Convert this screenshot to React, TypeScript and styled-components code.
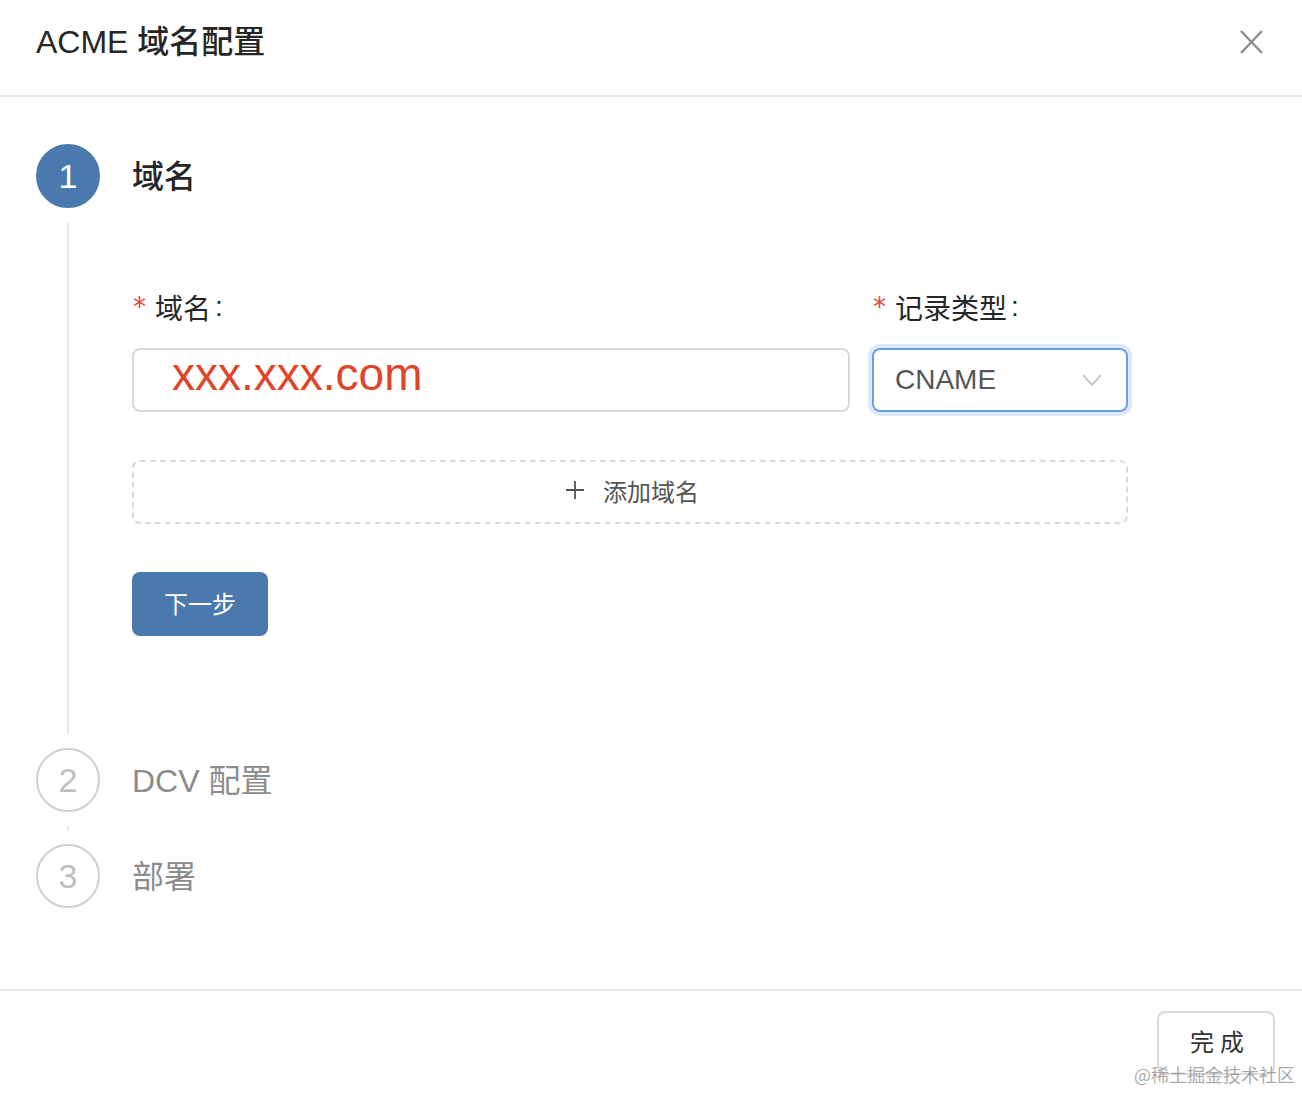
import styled, { createGlobalStyle } from "styled-components";

const FONT = `"Liberation Sans", "Noto Sans CJK SC", sans-serif`;
const BLUE = "#4a7aad";

const GlobalStyle = createGlobalStyle`
  body {
    margin: 0;
    background: #ffffff;
    font-family: ${FONT};
  }
`;

const Modal = styled.div`
  width: 1302px;
  height: 1094px;
  background: #fff;
  display: flex;
  flex-direction: column;
  position: relative;
  overflow: hidden;
`;

const Header = styled.div`
  height: 95px;
  padding: 0 36px;
  display: flex;
  align-items: center;
  justify-content: space-between;
  border-bottom: 2px solid #e8e8e8;
`;

const Title = styled.h1`
  margin: 0;
  font-size: 32px;
  font-weight: 500;
  color: #262626;
  padding-bottom: 18px;
`;

const CloseBtn = styled.button`
  border: 0;
  background: none;
  padding: 0;
  margin-right: 1px;
  margin-bottom: 12px;
  width: 28px;
  height: 28px;
  display: flex;
  align-items: center;
  justify-content: center;
`;

const Body = styled.div`
  padding: 47px 36px 49px;
  display: flex;
  flex-direction: column;
`;

const StepItem = styled.div`
  display: flex;
  gap: 32px;
`;

const StepRail = styled.div`
  width: 64px;
  display: flex;
  flex-direction: column;
  align-items: center;
`;

const Circle = styled.div<{ $active?: boolean }>`
  width: 64px;
  height: 64px;
  box-sizing: border-box;
  border-radius: 50%;
  display: flex;
  align-items: center;
  justify-content: center;
  font-size: 34px;
  background: ${(p) => (p.$active ? BLUE : "#fff")};
  border: 2px solid ${(p) => (p.$active ? BLUE : "#cfcfcf")};
  color: ${(p) => (p.$active ? "#fff" : "#bfbfbf")};
`;

const Tail = styled.div<{ $hidden?: boolean }>`
  flex: 1;
  width: 2px;
  margin: 14px 0 13px;
  background: ${(p) => (p.$hidden ? "transparent" : "#e8e8e8")};
`;

const StepContent = styled.div<{ $pad: number }>`
  flex: 1;
  padding-bottom: ${(p) => p.$pad}px;
`;

const StepTitle = styled.div<{ $active?: boolean }>`
  height: 64px;
  padding-bottom: 4px;
  box-sizing: border-box;
  display: flex;
  align-items: center;
  font-size: 32px;
  font-weight: ${(p) => (p.$active ? 500 : 400)};
  color: ${(p) => (p.$active ? "#262626" : "#8c8c8c")};
`;

const Form = styled.div`
  width: 996px;
  margin-top: 80px;
`;

const FieldRow = styled.div`
  display: grid;
  grid-template-columns: 1fr 256px;
  column-gap: 22px;
`;

const Field = styled.div`
  display: flex;
  flex-direction: column;
  gap: 20px;
`;

const Label = styled.label`
  height: 40px;
  display: flex;
  align-items: center;
  font-size: 28px;
  color: #262626;
  padding-left: 1px;
  padding-bottom: 2px;
  box-sizing: border-box;
`;

const Colon = styled.span`
  margin-left: 4px;
`;

const Star = styled.span`
  color: #e5453a;
  font-size: 26px;
  margin-right: 9px;
  font-family: "DejaVu Sans", sans-serif;
`;

const InputBox = styled.div`
  height: 64px;
  box-sizing: border-box;
  border: 2px solid #d9d9d9;
  border-radius: 8px;
  padding: 0 0 12px 38px;
  display: flex;
  align-items: center;
`;

const RedText = styled.span`
  color: #e0452a;
  font-size: 46px;
  line-height: 1;
`;

const SelectBox = styled.div`
  height: 64px;
  box-sizing: border-box;
  border: 2px solid #6a9de8;
  border-radius: 8px;
  box-shadow: 0 0 0 4px #dde9fa;
  padding: 0 24px 0 21px;
  display: flex;
  align-items: center;
  justify-content: space-between;
  font-size: 28px;
  color: #555;
`;

const DashedButton = styled.button`
  margin-top: 48px;
  width: 100%;
  height: 64px;
  border: 2px dashed #d9d9d9;
  border-radius: 8px;
  background: #fff;
  display: flex;
  align-items: center;
  justify-content: center;
  gap: 18px;
  padding: 0 0 4px 4px;
  font-family: ${FONT};
  font-size: 24px;
  color: #555;
`;

const PrimaryButton = styled.button`
  margin-top: 48px;
  width: 136px;
  height: 64px;
  border: 0;
  border-radius: 8px;
  background: ${BLUE};
  color: #fff;
  padding: 0 0 4px;
  font-family: ${FONT};
  font-size: 24px;
`;

const Footer = styled.div`
  border-top: 2px solid #e8e8e8;
  padding: 20px 27px 0;
  display: flex;
  justify-content: flex-end;
`;

const DefaultButton = styled.button`
  width: 118px;
  height: 64px;
  border: 2px solid #d9d9d9;
  border-radius: 8px;
  background: #fff;
  color: #333;
  font-family: ${FONT};
  font-size: 24px;
  letter-spacing: 6px;
  padding: 0 0 6px 8px;
`;

const Watermark = styled.div`
  position: absolute;
  right: 7px;
  bottom: 7px;
  font-family: "Noto Sans CJK SC", serif;
  font-size: 18px;
  color: rgba(140, 140, 140, 0.75);
`;

export default function App() {
  return (
    <Modal>
      <GlobalStyle />
      <Header>
        <Title>ACME 域名配置</Title>
        <CloseBtn>
          <svg width="23" height="24" viewBox="0 0 23 24">
            <path d="M1 1 L22 23 M22 1 L1 23" stroke="#8c8c8c" strokeWidth="2.4" fill="none" />
          </svg>
        </CloseBtn>
      </Header>
      <Body>
        <StepItem>
          <StepRail>
            <Circle $active>1</Circle>
            <Tail />
          </StepRail>
          <StepContent $pad={112}>
            <StepTitle $active>域名</StepTitle>
            <Form>
              <FieldRow>
                <Field>
                  <Label>
                    <Star>*</Star>域名<Colon>:</Colon>
                  </Label>
                  <InputBox>
                    <RedText>xxx.xxx.com</RedText>
                  </InputBox>
                </Field>
                <Field>
                  <Label>
                    <Star>*</Star>记录类型<Colon>:</Colon>
                  </Label>
                  <SelectBox>
                    <span>CNAME</span>
                    <svg width="20" height="14" viewBox="0 0 20 14">
                      <path d="M1 2 L10 12 L19 2" stroke="#bfbfbf" strokeWidth="1.8" fill="none" />
                    </svg>
                  </SelectBox>
                </Field>
              </FieldRow>
              <DashedButton>
                <svg width="20" height="20" viewBox="0 0 20 20">
                  <path d="M10 1 V19 M1 10 H19" stroke="#555" strokeWidth="1.8" fill="none" />
                </svg>
                添加域名
              </DashedButton>
              <PrimaryButton>下一步</PrimaryButton>
            </Form>
          </StepContent>
        </StepItem>
        <StepItem>
          <StepRail>
            <Circle>2</Circle>
            <Tail />
          </StepRail>
          <StepContent $pad={32}>
            <StepTitle>DCV 配置</StepTitle>
          </StepContent>
        </StepItem>
        <StepItem>
          <StepRail>
            <Circle>3</Circle>
            <Tail $hidden />
          </StepRail>
          <StepContent $pad={32}>
            <StepTitle>部署</StepTitle>
          </StepContent>
        </StepItem>
      </Body>
      <Footer>
        <DefaultButton>完成</DefaultButton>
      </Footer>
      <Watermark>@稀土掘金技术社区</Watermark>
    </Modal>
  );
}
